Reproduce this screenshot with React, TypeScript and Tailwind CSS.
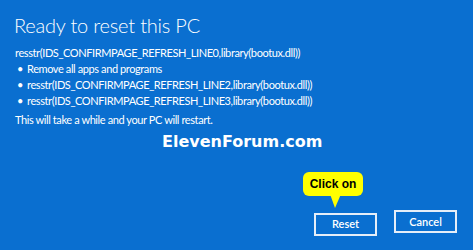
export default function App() {
  const lines = [
    'Remove all apps and programs',
    'resstr(IDS_CONFIRMPAGE_REFRESH_LINE2,library(bootux.dll))',
    'resstr(IDS_CONFIRMPAGE_REFRESH_LINE3,library(bootux.dll))',
  ]

  return (
    <div className="w-[473px] h-[250px] bg-[#0a6fd0] text-white flex flex-col font-['Lato',sans-serif] overflow-hidden">
      {/* Title */}
      <h1 className="pl-[14px] pt-[11px] text-[20px] font-light leading-[28px] tracking-[-0.2px]">
        Ready to reset this PC
      </h1>

      {/* Body */}
      <div className="pl-[15px] pt-[6px] text-[11px] leading-[16px] tracking-[-0.4px]">
        <p>resstr(IDS_CONFIRMPAGE_REFRESH_LINE0,library(bootux.dll))</p>
        <ul>
          {lines.map((line) => (
            <li key={line} className="flex">
              <span className="w-[12px] pl-[2px]">•</span>
              <span>{line}</span>
            </li>
          ))}
        </ul>
        <p className="mt-[3px]">This will take a while and your PC will restart.</p>
      </div>

      {/* Watermark */}
      <div className="pl-[162px] pt-[3px] text-[16px] font-bold leading-[22px] font-['DejaVu_Sans',sans-serif]">
        ElevenForum.com
      </div>

      {/* Buttons */}
      <div className="mt-auto mb-[14px] pr-[16px] flex justify-end gap-[17px]">
        <div className="relative">
          <div className="absolute left-[-11px] top-[-38px] w-[60px] h-[24px] rounded-[6px] bg-[#ffff00] text-black text-[12px] font-bold font-['Liberation_Sans',sans-serif] flex items-center justify-center">
            Click on
            <svg className="absolute left-[25px] top-[22px]" width="14" height="14" viewBox="0 0 14 14">
              <path d="M2 0 L13 0 L7 14 Z" fill="#ffff00" />
            </svg>
          </div>
          <button className="w-[63px] h-[23px] border-2 border-[#e6eef8] text-[11px] font-semibold bg-[#0a6fd0]">
            Reset
          </button>
        </div>
        <button className="w-[63px] h-[23px] border-2 border-[#e6eef8] text-[11px] font-semibold bg-[#0a6fd0]">
          Cancel
        </button>
      </div>
    </div>
  )
}
